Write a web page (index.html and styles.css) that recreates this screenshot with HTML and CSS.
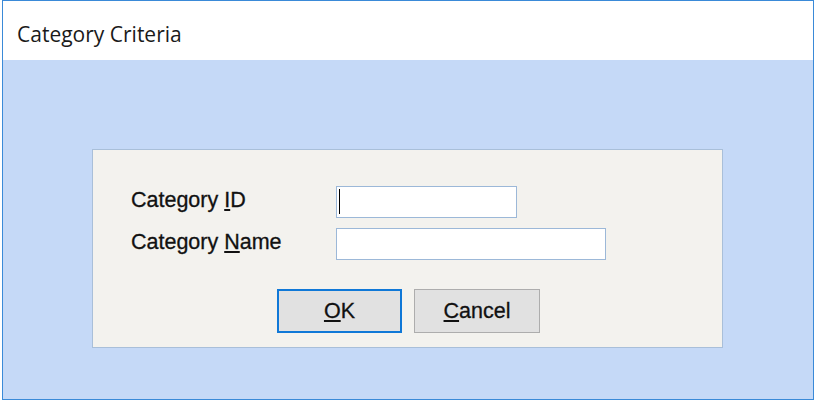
FILE: index.html
```html
<!DOCTYPE html>
<html lang="en">
<head>
    <meta charset="UTF-8">
    <meta name="viewport" content="width=device-width, initial-scale=1.0">
    <title>Category Criteria</title>
    <link rel="stylesheet" href="styles.css">
</head>
<body>
    <div class="window">
        <div class="titlebar">Category Criteria</div>
        <div class="client">
            <div class="panel">
                <div class="row">
                    <label for="catId" class="label">Category <u>I</u>D</label>
                    <div class="field short"><span class="caret"></span></div>
                </div>
                <div class="row">
                    <label for="catName" class="label">Category <u>N</u>ame</label>
                    <div class="field long"></div>
                </div>
                <div class="buttons">
                    <button class="btn default"><u>O</u>K</button>
                    <button class="btn"><u>C</u>ancel</button>
                </div>
            </div>
        </div>
    </div>
</body>
</html>
```

FILE: styles.css
```css
body {
    margin: 0;
    background-color: #ffffff;
}

.window {
    margin-left: 2px;
    width: 810px;
    height: 398px;
    border: 1px solid #3a8ad8;
    display: flex;
    flex-direction: column;
}

.titlebar {
    height: 59px;
    background-color: #ffffff;
    font-family: "Open Sans", sans-serif;
    font-size: 21px;
    color: #1a1a1a;
    padding-left: 14px;
    line-height: 66px;
    box-sizing: border-box;
}

.client {
    flex: 1;
    background-color: #c5d9f7;
    padding: 89px 0 0 89px;
}

.panel {
    width: 591px;
    height: 161px;
    background-color: #f3f2ee;
    border: 1px solid #a9bfd9;
    padding: 36px 0 0 38px;
    font-family: "Liberation Sans", Arial, sans-serif;
    font-size: 21.5px;
    color: #111111;
    -webkit-text-stroke: 0.3px #111111;
}

.row {
    display: flex;
    height: 32px;
    align-items: center;
    margin-bottom: 10px;
}

.label {
    width: 205px;
    margin-top: -3px;
}

.field {
    height: 30px;
    background-color: #ffffff;
    border: 1px solid #9cb8d8;
    position: relative;
}

.short {
    width: 179px;
}

.long {
    width: 268px;
}

.caret {
    position: absolute;
    left: 2px;
    top: 2px;
    width: 1px;
    height: 25px;
    background-color: #000000;
}

.buttons {
    display: flex;
    gap: 12px;
    margin: 29px 0 0 146px;
}

.btn {
    width: 126px;
    height: 44px;
    background-color: #e1e1e1;
    border: 1px solid #adadad;
    font-family: "Liberation Sans", Arial, sans-serif;
    font-size: 21.5px;
    color: #111111;
    -webkit-text-stroke: 0.3px #111111;
    padding: 0;
}

.default {
    width: 125px;
    border: 2px solid #0f78d7;
}
```
